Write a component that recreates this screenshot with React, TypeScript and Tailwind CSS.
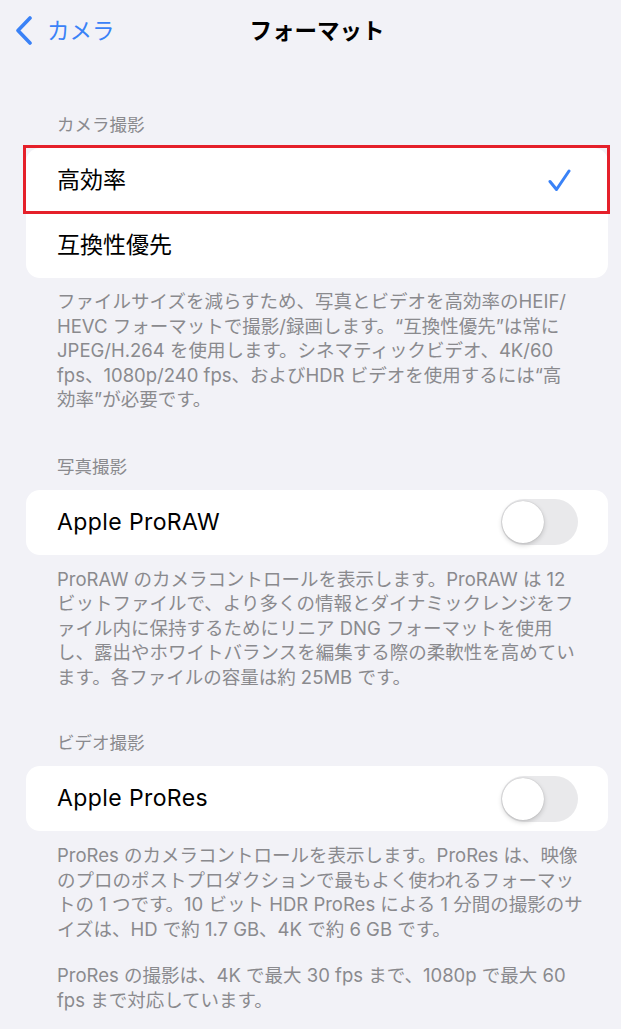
import React from "react";

const FONT = { fontFamily: 'Inter, "Noto Sans CJK JP", sans-serif' };

function Toggle() {
  return (
    <div className="relative h-[46px] w-[77px] rounded-full bg-[#e9e9eb]">
      <div className="absolute left-[1px] top-[2px] h-[42px] w-[42px] rounded-full bg-white shadow-[0_2px_5px_rgba(0,0,0,0.18),0_0_1px_rgba(0,0,0,0.25)]" />
    </div>
  );
}

function Header({ children }: { children: React.ReactNode }) {
  return (
    <div className="pl-[57px] text-[17.5px] leading-[22px] text-[#8a8a8e]">{children}</div>
  );
}

function Footer({ lines }: { lines: string[] }) {
  return (
    <div className="pl-[57px] text-[18.5px] leading-[24.5px] text-[#8a8a8e] whitespace-nowrap">
      {lines.map((l, i) => (
        <div key={i}>{l}</div>
      ))}
    </div>
  );
}

export default function App() {
  return (
    <div className="min-h-[1029px] w-[621px] bg-[#f2f2f7] pb-8" style={FONT}>
      {/* Nav */}
      <div className="relative flex h-[62px] items-center">
        <div className="flex items-center pl-[15px]">
          <svg width="18" height="30" viewBox="0 0 18 30" className="mr-[14px]">
            <path
              d="M15 2 L3 14.5 L15 27"
              fill="none"
              stroke="#3a82f7"
              strokeWidth="3.6"
              strokeLinecap="round"
              strokeLinejoin="round"
            />
          </svg>
          <span className="text-[22.5px] text-[#3a82f7]">カメラ</span>
        </div>
        <div className="absolute inset-0 flex items-center justify-center pl-[13px] pointer-events-none">
          <span className="text-[22.5px] font-bold text-black">フォーマット</span>
        </div>
      </div>

      {/* Section 1 */}
      <div className="mt-[52px]">
        <Header>カメラ撮影</Header>
        <div className="ml-[26px] mt-[12px] w-[582px] rounded-[14px] bg-white">
          <div className="relative flex h-[65px] items-center justify-between pl-[31px] pr-[37px]">
            <span className="text-[23px] text-black">高効率</span>
            <svg width="23" height="23" viewBox="0 0 23 23">
              <path
                d="M2 12.5 L8.5 20.5 L21 2"
                fill="none"
                stroke="#3a82f7"
                strokeWidth="3"
                strokeLinecap="round"
                strokeLinejoin="round"
              />
            </svg>
            <div className="pointer-events-none absolute -left-[3px] -top-[3px] -right-[2px] -bottom-[1px] border-[3px] border-[#e5202a]" />
          </div>
          <div className="flex h-[65px] items-center pl-[31px]">
            <span className="text-[23px] text-black">互換性優先</span>
          </div>
        </div>
        <div className="pt-[11px]">
          <Footer
            lines={[
              "ファイルサイズを減らすため、写真とビデオを高効率のHEIF/",
              "HEVC フォーマットで撮影/録画します。“互換性優先”は常に",
              "JPEG/H.264 を使用します。シネマティックビデオ、4K/60",
              "fps、1080p/240 fps、およびHDR ビデオを使用するには“高",
              "効率”が必要です。",
            ]}
          />
        </div>
      </div>

      {/* Section 2 */}
      <div className="mt-[44px]">
        <Header>写真撮影</Header>
        <div className="ml-[26px] mt-[12px] flex h-[65px] w-[582px] items-center justify-between rounded-[14px] bg-white pl-[31px] pr-[30px]">
          <span className="text-[23px] tracking-[0.4px] text-black">Apple ProRAW</span>
          <Toggle />
        </div>
        <div className="pt-[12px]">
          <Footer
            lines={[
              "ProRAW のカメラコントロールを表示します。ProRAW は 12",
              "ビットファイルで、より多くの情報とダイナミックレンジをフ",
              "ァイル内に保持するためにリニア DNG フォーマットを使用",
              "し、露出やホワイトバランスを編集する際の柔軟性を高めてい",
              "ます。各ファイルの容量は約 25MB です。",
            ]}
          />
        </div>
      </div>

      {/* Section 3 */}
      <div className="mt-[43px]">
        <Header>ビデオ撮影</Header>
        <div className="ml-[26px] mt-[12px] flex h-[65px] w-[582px] items-center justify-between rounded-[14px] bg-white pl-[31px] pr-[30px]">
          <span className="text-[23px] tracking-[0.4px] text-black">Apple ProRes</span>
          <Toggle />
        </div>
        <div className="pt-[12px]">
          <Footer
            lines={[
              "ProRes のカメラコントロールを表示します。ProRes は、映像",
              "のプロのポストプロダクションで最もよく使われるフォーマッ",
              "トの 1 つです。10 ビット HDR ProRes による 1 分間の撮影のサ",
              "イズは、HD で約 1.7 GB、4K で約 6 GB です。",
            ]}
          />
          <div className="mt-[22px]">
            <Footer
              lines={[
                "ProRes の撮影は、4K で最大 30 fps まで、1080p で最大 60",
                "fps まで対応しています。",
              ]}
            />
          </div>
        </div>
      </div>
    </div>
  );
}
